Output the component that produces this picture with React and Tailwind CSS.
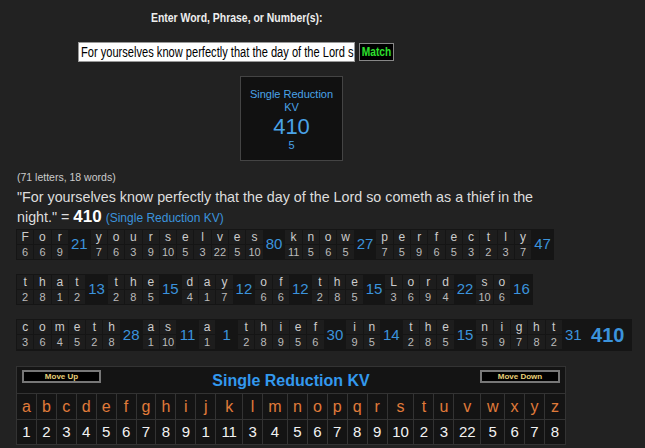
import React from 'react';

const ROWS = [
  [
    { w: 'For', v: [6, 6, 9], s: 21 },
    { w: 'yourselves', v: [7, 6, 3, 9, 10, 5, 3, 22, 5, 10], s: 80 },
    { w: 'know', v: [11, 5, 6, 5], s: 27 },
    { w: 'perfectly', v: [7, 5, 9, 6, 5, 3, 2, 3, 7], s: 47 },
  ],
  [
    { w: 'that', v: [2, 8, 1, 2], s: 13 },
    { w: 'the', v: [2, 8, 5], s: 15 },
    { w: 'day', v: [4, 1, 7], s: 12 },
    { w: 'of', v: [6, 6], s: 12 },
    { w: 'the', v: [2, 8, 5], s: 15 },
    { w: 'Lord', v: [3, 6, 9, 4], s: 22 },
    { w: 'so', v: [10, 6], s: 16 },
  ],
  [
    { w: 'cometh', v: [3, 6, 4, 5, 2, 8], s: 28 },
    { w: 'as', v: [1, 10], s: 11 },
    { w: 'a', v: [1], s: 1 },
    { w: 'thief', v: [2, 8, 9, 5, 6], s: 30 },
    { w: 'in', v: [9, 5], s: 14 },
    { w: 'the', v: [2, 8, 5], s: 15 },
    { w: 'night', v: [5, 9, 7, 8, 2], s: 31 },
  ],
];

const CIPHER = [
  ['a', 1, 'w-[20px]'], ['b', 2, 'w-[20px]'], ['c', 3, 'w-[20px]'], ['d', 4, 'w-[20px]'],
  ['e', 5, 'w-[20px]'], ['f', 6, 'w-[20px]'], ['g', 7, 'w-[20px]'], ['h', 8, 'w-[20px]'],
  ['i', 9, 'w-[20px]'], ['j', 1, 'w-[20px]'], ['k', 11, 'w-[27px]'], ['l', 3, 'w-[20px]'],
  ['m', 4, 'w-[25px]'], ['n', 5, 'w-[20px]'], ['o', 6, 'w-[20px]'], ['p', 7, 'w-[20px]'],
  ['q', 8, 'w-[20px]'], ['r', 9, 'w-[20px]'], ['s', 10, 'w-[27px]'], ['t', 2, 'w-[20px]'],
  ['u', 3, 'w-[20px]'], ['v', 22, 'w-[27px]'], ['w', 5, 'w-[24px]'], ['x', 6, 'w-[20px]'],
  ['y', 7, 'w-[20px]'], ['z', 8, 'w-[20px]'],
];

function WordRow({ words, total }) {
  return (
    <div className="flex">
      <div className="flex bg-[#151515] p-px gap-px">
        {words.map((wd, i) => (
          <React.Fragment key={i}>
            {wd.w.split('').map((ch, j) => (
              <div key={j} className="flex flex-col gap-px">
                <div className="w-[16.3px] h-[14px] bg-[#1d1d1d] flex items-center justify-center text-[12px] text-[#cccccc]">{ch}</div>
                <div className="w-[16.3px] h-[14px] bg-[#1d1d1d] flex items-center justify-center text-[11px] text-[#bbbbbb]">{wd.v[j]}</div>
              </div>
            ))}
            <div className="flex items-center justify-center w-[20.8px] text-[15px] text-[#3b93dc]">{wd.s}</div>
          </React.Fragment>
        ))}
        {total && (
          <div className="flex items-center justify-center w-[46px] text-[20px] font-bold text-[#3b93dc]">{total}</div>
        )}
      </div>
    </div>
  );
}

export default function App() {
  return (
    <div className="w-[645px] h-[448px] overflow-hidden bg-[#222222] text-[#dddddd]" style={{ fontFamily: '"Liberation Sans", Arial, sans-serif' }}>
      {/* Header */}
      <div className="pt-[10px] pl-[151px] leading-[14px]">
        <span className="inline-block scale-y-[1.15] whitespace-nowrap text-[10.45px] font-bold text-[#eeeeee]">Enter Word, Phrase, or Number(s):</span>
      </div>

      <div className="flex items-center gap-[4px] pl-[78px] mt-[16px]">
        <div className="w-[277px] h-[20px] bg-white border border-[#999] flex items-center pl-[2px] overflow-hidden whitespace-nowrap">
          <span className="inline-block scale-y-[1.26] text-[11.1px] text-black">For yourselves know perfectly that the day of the Lord s</span>
        </div>
        <div className="w-[35px] h-[18px] bg-black border border-[#888] flex items-center justify-center">
          <span className="inline-block scale-y-[1.18] text-[10.2px] font-bold text-[#2ee02e]">Match</span>
        </div>
      </div>

      {/* Result box */}
      <div className="ml-[240px] mt-[14px] w-[103px] h-[85px] bg-[#111111] border border-[#444] flex flex-col items-center text-[#4aa3e8]">
        <div className="mt-[11px] text-[11px] leading-[13px] text-center">Single Reduction<br />KV</div>
        <div className="text-[22px] leading-[24px] mt-[1px]">410</div>
        <div className="text-[11px] leading-[13px]">5</div>
      </div>

      {/* Summary */}
      <div className="pl-[17px] mt-[9px]">
        <div className="text-[10.5px] leading-[14px] text-[#cccccc]">(71 letters, 18 words)</div>
        <div className="text-[14.3px] leading-[19px] text-[#dddddd] mt-[4px]">
          "For yourselves know perfectly that the day of the Lord so cometh as a thief in the<br />
          night." = <span className="text-[17px] font-bold text-white">410</span> <span className="text-[12px] text-[#3b93dc]">(Single Reduction KV)</span>
        </div>
      </div>

      {/* Breakdown */}
      <div className="pl-[16px] mt-[1px] flex flex-col gap-[14px]">
        <WordRow words={ROWS[0]} />
        <WordRow words={ROWS[1]} />
        <WordRow words={ROWS[2]} total={410} />
      </div>

      {/* Cipher chart */}
      <div className="ml-[16px] mt-[15px] w-[550px] border border-[#333] bg-[#141414]">
        <div className="h-[26px] flex items-start justify-between px-[5px] pt-[3px] relative">
          <button className="w-[79px] h-[13px] bg-black border-2 border-[#777] text-[8px] font-bold text-[#e8d078] leading-[8px]">Move Up</button>
          <div className="absolute left-0 right-0 top-[5px] text-center text-[16px] font-bold text-[#3399ee] leading-[18px]">Single Reduction KV</div>
          <button className="w-[80px] h-[13px] bg-black border-2 border-[#777] text-[8px] font-bold text-[#e8d078] leading-[8px]">Move Down</button>
        </div>
        <div className="flex border-t border-[#333]">
          {CIPHER.map(([l, n, w]) => (
            <div key={l} className={`${w} flex flex-col border-r border-[#333] last:border-r-0`}>
              <div className="h-[26px] flex items-center justify-center text-[16px] text-[#e07b3a] border-b border-[#333]">{l}</div>
              <div className="h-[24px] flex items-center justify-center text-[15px] text-[#f2f2f2]">{n}</div>
            </div>
          ))}
        </div>
      </div>
    </div>
  );
}
